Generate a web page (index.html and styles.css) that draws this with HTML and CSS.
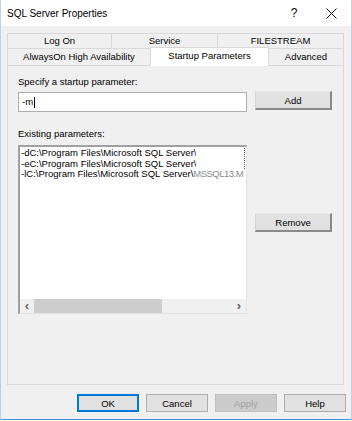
FILE: index.html
```html
<!DOCTYPE html>
<html lang="en">

<head>
    <meta charset="UTF-8">
    <title>SQL Server Properties</title>
    <link rel="stylesheet" href="styles.css">
</head>

<body>
    <div class="window">
        <div class="titlebar">
            <span class="title">SQL Server Properties</span>
            <span class="help-mark">?</span>
            <span class="close-btn">
                <svg width="11" height="11" viewBox="0 0 11 11">
                    <path d="M0.5 0.5 L10.5 10.5 M10.5 0.5 L0.5 10.5" stroke="#111" stroke-width="1" fill="none" />
                </svg>
            </span>
        </div>
        <div class="client">
            <div class="tabs">
                <div class="tab-row back-row">
                    <div class="tab">Log On</div>
                    <div class="tab">Service</div>
                    <div class="tab">FILESTREAM</div>
                </div>
                <div class="tab-row front-row">
                    <div class="tab">AlwaysOn High Availability</div>
                    <div class="tab selected">Startup Parameters</div>
                    <div class="tab">Advanced</div>
                </div>
            </div>
            <div class="panel">
                <div class="form-grid">
                    <div class="label">Specify a startup parameter:</div>
                    <div class="edit-box">-m<span class="caret"></span></div>
                    <button class="btn side-btn">Add</button>

                    <div class="label second">Existing parameters:</div>
                    <div class="listbox">
                        <div class="list-items">
                            <div class="focus-group">
                                <div class="item">-dC:\Program Files\Microsoft SQL Server\<span class="blank"></span></div>
                                <div class="item">-eC:\Program Files\Microsoft SQL Server\<span class="blank"></span></div>
                            </div>
                            <div class="item">-lC:\Program Files\Microsoft SQL Server\<span class="smudge">MSSQL13.M</span></div>
                        </div>
                        <div class="hscroll">
                            <span class="arrow">&#x2039;</span>
                            <div class="track"><div class="thumb"></div></div>
                            <span class="arrow">&#x203A;</span>
                        </div>
                    </div>
                    <div class="side-col">
                        <button class="btn side-btn">Remove</button>
                    </div>
                </div>
            </div>
            <div class="dialog-buttons">
                <button class="btn dlg default">OK</button>
                <button class="btn dlg">Cancel</button>
                <button class="btn dlg" disabled>Apply</button>
                <button class="btn dlg">Help</button>
            </div>
        </div>
    </div>
</body>

</html>
```

FILE: styles.css
```css
body {
    margin: 0;
    padding: 0;
    background: #fff;
    font-family: 'Liberation Sans', Arial, sans-serif;
    font-size: 9.5px;
    color: #000;
}

.window {
    width: 352px;
    height: 420px;
    box-sizing: border-box;
    border-left: 1px solid #b9d3ea;
    border-right: 1px solid #b9d3ea;
    border-bottom: 1px solid #4a8fd6;
    background: #f0f0f0;
    display: flex;
    flex-direction: column;
}

.titlebar {
    height: 26px;
    background: #fff;
    display: flex;
    align-items: center;
    padding-left: 6px;
    font-size: 10px;
}

.title {
    flex: 1;
}

.help-mark {
    width: 12px;
    text-align: center;
    font-size: 12px;
    margin-right: 26px;
}

.close-btn {
    display: flex;
    margin-right: 14px;
}

.client {
    flex: 1;
    padding: 7px 7px 0 6px;
    display: flex;
    flex-direction: column;
}

/* tabs */
.tabs {
    width: 337px;
}

.tab-row {
    display: grid;
}

.back-row {
    grid-template-columns: 104px 106px 127px;
    height: 15px;
}

.front-row {
    grid-template-columns: 143px 119px 75px;
    height: 17px;
}

.tab {
    border: 1px solid #d9d9d9;
    border-right: none;
    text-align: center;
    line-height: 15px;
    background: #f0f0f0;
}

.tab:last-child {
    border-right: 1px solid #d9d9d9;
}

.back-row .tab {
    border-bottom: none;
    line-height: 14px;
}

.front-row .tab {
    line-height: 16px;
}

.front-row .tab.selected {
    background: #fff;
    border-bottom: none;
    margin-top: -1px;
    line-height: 15px;
    border-right: 1px solid #d9d9d9;
}

.front-row .tab.selected+.tab {
    border-left: none;
}

/* page */
.panel {
    width: 337px;
    height: 320px;
    box-sizing: border-box;
    border: 1px solid #d9d9d9;
    border-top: none;
    padding: 11px 10px 0 10px;
}

.form-grid {
    display: grid;
    grid-template-columns: 229px 77px;
    column-gap: 8px;
    align-items: start;
}

.label {
    grid-column: 1 / 3;
    line-height: 12px;
    margin-bottom: 3px;
}

.label.second {
    margin-top: 16px;
    margin-bottom: 5px;
}

.edit-box {
    height: 20px;
    box-sizing: border-box;
    margin-top: 1px;
    border: 1px solid #adadad;
    background: #fff;
    padding-left: 3px;
    line-height: 18px;
    display: flex;
    align-items: center;
}

.caret {
    display: inline-block;
    width: 1px;
    height: 11px;
    background: #000;
    margin-left: 1px;
}

.btn {
    font-family: 'Liberation Sans', Arial, sans-serif;
    font-size: 9.5px;
    color: #000;
    background: #e1e1e1;
    border: 1px solid #adadad;
    padding: 0;
    margin: 0;
}

.side-btn {
    height: 19px;
    width: 77px;
    border-right: 2px solid #8a8a8a;
    border-bottom: 2px solid #8a8a8a;
    border-top-color: #e8e8e8;
    border-left-color: #d4d4d4;
}

.side-col {
    padding-top: 68px;
}

/* list box */
.listbox {
    height: 169px;
    box-sizing: border-box;
    border-top: 2px solid #a0a0a0;
    border-left: 2px solid #a0a0a0;
    border-right: 1px solid #e3e3e3;
    border-bottom: 1px solid #e3e3e3;
    background: #fff;
    display: flex;
    flex-direction: column;
}

.list-items {
    flex: 1;
    padding: 1px 0 0 1px;
    overflow: hidden;
}

.focus-group {
    border-right: 1px dotted #555;
    margin-right: 1px;
}

.item {
    height: 10.5px;
    line-height: 10.5px;
    white-space: nowrap;
    display: flex;
}

.blank {
    flex: 1;
    background: #fff;
}

.smudge {
    color: #8a8a8a;
    letter-spacing: -0.5px;
}

.hscroll {
    height: 14px;
    background: #f0f0f0;
    display: flex;
    align-items: center;
}

.arrow {
    width: 14px;
    text-align: center;
    font-size: 13px;
    font-weight: bold;
    color: #606060;
    line-height: 14px;
}

.track {
    flex: 1;
    height: 14px;
}

.thumb {
    width: 128px;
    height: 14px;
    background: #cdcdcd;
}

/* bottom buttons */
.dialog-buttons {
    display: flex;
    justify-content: flex-end;
    gap: 7px;
    padding-top: 9px;
    margin-right: -2px;
}

.dlg {
    width: 62px;
    height: 18px;
}

.dlg.default {
    border: 2px solid #0078d7;
}

.dlg:disabled {
    background: #cccccc;
    border-color: #bfbfbf;
    color: #a0a0a0;
}
```
